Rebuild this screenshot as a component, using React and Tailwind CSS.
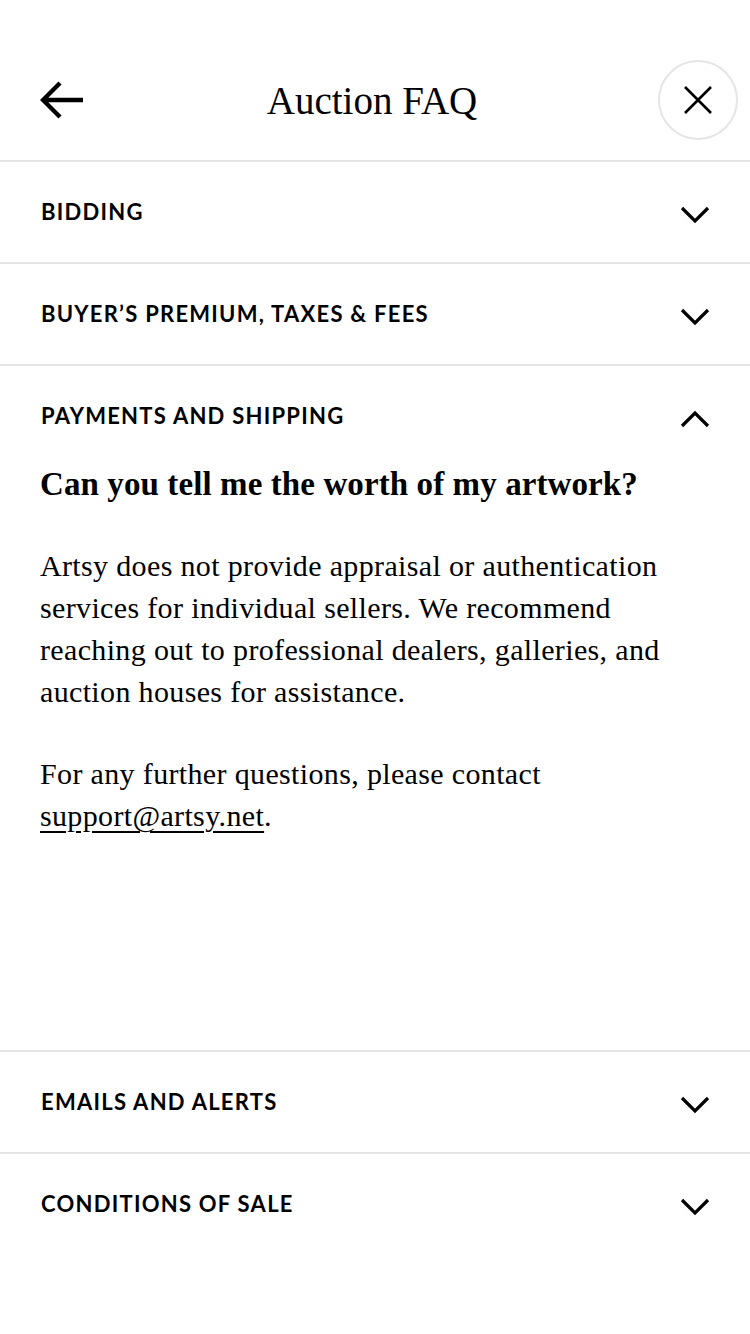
import React, { useState } from "react";

const sans = { fontFamily: '"Lato", "Inter", sans-serif' };

const Chevron = ({ up }) => (
    <svg className="mt-[5px]" width="30" height="18" viewBox="0 0 30 18" fill="none">
        <path
            d={up ? "M2 16L15 3L28 16" : "M2 2L15 15L28 2"}
            stroke="black"
            strokeWidth="3.2"
        />
    </svg>
);

const sections = [
    "BIDDING",
    "BUYER’S PREMIUM, TAXES & FEES",
    "PAYMENTS AND SHIPPING",
    "EMAILS AND ALERTS",
    "CONDITIONS OF SALE",
];

export default function App() {
    const [open, setOpen] = useState(2);

    return (
        <div className="w-[750px] min-h-[1334px] bg-white text-black" style={{ fontFamily: '"Liberation Serif", serif' }}>
            {/* Header */}
            <div className="h-[162px] pt-[40px] flex items-center justify-between pl-[40px] pr-[12px] border-b-2 border-[#e5e5e5]">
                <button className="w-[46px] h-[40px] flex items-center">
                    <svg width="44" height="38" viewBox="0 0 44 38" fill="none">
                        <path d="M43 19H4M20 2L3 19L20 36" stroke="black" strokeWidth="4.4" />
                    </svg>
                </button>
                <h1 className="text-[39px] leading-none">Auction FAQ</h1>
                <button className="w-[80px] h-[80px] rounded-full border-2 border-[#e5e5e5] flex items-center justify-center">
                    <svg width="30" height="30" viewBox="0 0 30 30" fill="none">
                        <path d="M2 2L28 28M28 2L2 28" stroke="black" strokeWidth="2.6" />
                    </svg>
                </button>
            </div>

            {sections.map((title, i) => (
                <div key={title} className="border-b-2 border-[#e5e5e5] last:border-b-0">
                    <button
                        onClick={() => setOpen(open === i ? -1 : i)}
                        className="w-full h-[100px] flex items-center justify-between pl-[41px] pr-[40px]"
                    >
                        <span className="text-[22px] font-bold tracking-[1.25px] leading-none" style={sans}>
                            {title}
                        </span>
                        <Chevron up={open === i} />
                    </button>
                    {open === i && (
                        <div className="px-[40px] pb-[213px]">
                            <h2 className="text-[33px] font-bold leading-[36px] tracking-[0.1px]">
                                Can you tell me the worth of my artwork?
                            </h2>
                            <div className="mt-[43px] text-[30px] leading-[42px] tracking-[0.35px]">
                                <p>
                                    Artsy does not provide appraisal or authentication services for individual
                                    sellers. We recommend reaching out to professional dealers, galleries, and
                                    auction houses for assistance.
                                </p>
                                <p className="mt-[40px]">
                                    For any further questions, please contact{" "}
                                    <a href="#" className="underline underline-offset-[5px] decoration-[1.5px]">support@artsy.net</a>.
                                </p>
                            </div>
                        </div>
                    )}
                </div>
            ))}
        </div>
    );
}
